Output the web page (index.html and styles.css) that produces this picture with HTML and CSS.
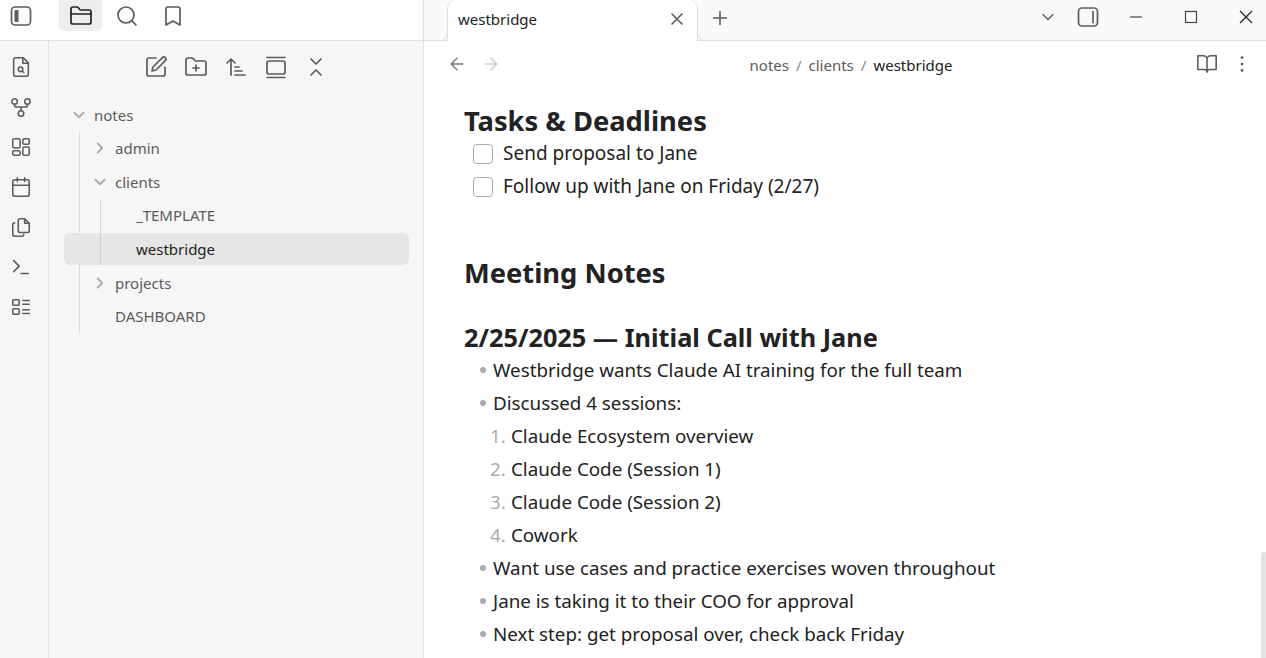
FILE: index.html
```html
<!DOCTYPE html>
<html lang="en">
<head>
<meta charset="utf-8">
<title>westbridge</title>
<link rel="stylesheet" href="styles.css">
</head>
<body>
<div class="app">
  <aside class="left">
    <div class="left-top">
      <span class="btn toggle"><svg class="ic" viewBox="0 0 24 24"><rect x="2.5" y="3" width="19" height="18" rx="3.5"/><rect class="fill" x="5.5" y="6" width="4" height="12" rx="1"/></svg></span>
      <div class="tabs-ic">
        <span class="btn act"><svg class="ic dark" viewBox="0 0 24 24"><path d="M20 20a2 2 0 0 0 2-2V8a2 2 0 0 0-2-2h-7.9a2 2 0 0 1-1.69-.9L9.6 3.9A2 2 0 0 0 7.93 3H4a2 2 0 0 0-2 2v13a2 2 0 0 0 2 2Z"/><path d="M2 10h20"/></svg></span>
        <span class="btn"><svg class="ic" viewBox="0 0 24 24"><circle cx="11" cy="11" r="8"/><path d="m21 21-4.3-4.3"/></svg></span>
        <span class="btn"><svg class="ic" viewBox="0 0 24 24"><path d="m19 21-7-4-7 4V5a2 2 0 0 1 2-2h10a2 2 0 0 1 2 2v16z"/></svg></span>
      </div>
    </div>
    <div class="left-body">
      <nav class="ribbon">
        <svg class="ic" viewBox="0 0 24 24"><path d="M14.5 2H6a2 2 0 0 0-2 2v16a2 2 0 0 0 2 2h12a2 2 0 0 0 2-2V7.5L14.5 2z"/><path d="M14 2v6h6"/><circle cx="11.5" cy="14.5" r="2.5"/><path d="M13.3 16.3 15 18"/></svg>
        <svg class="ic" viewBox="0 0 24 24"><circle cx="5" cy="6" r="3"/><circle cx="19" cy="6" r="3"/><circle cx="12" cy="19" r="3"/><path d="M5 9v1a2 2 0 0 0 2 2h10a2 2 0 0 0 2-2V9M12 12v4"/></svg>
        <svg class="ic" viewBox="0 0 24 24"><rect x="3" y="3" width="8" height="10" rx="1.5"/><rect x="14" y="3" width="7" height="6" rx="1.5"/><rect x="14" y="12" width="7" height="9" rx="1.5"/><rect x="3" y="16" width="8" height="5" rx="1.5"/></svg>
        <svg class="ic" viewBox="0 0 24 24"><path d="M8 2v4M16 2v4"/><rect x="3" y="4" width="18" height="18" rx="2"/><path d="M3 10h18"/></svg>
        <svg class="ic" viewBox="0 0 24 24"><path d="M9 16V5a2 2 0 0 1 2-2h5l5 5v8a2 2 0 0 1-2 2h-8a2 2 0 0 1-2-2Z"/><path d="M16 3v5h5"/><path d="M5 7.5A2 2 0 0 0 3 9.5V20a2 2 0 0 0 2 2h8a2 2 0 0 0 2-2"/></svg>
        <svg class="ic" viewBox="0 0 24 24"><path d="m4 17 6-6-6-6M12 19h8"/></svg>
        <svg class="ic" viewBox="0 0 24 24"><rect x="3" y="4" width="7" height="6" rx="1"/><rect x="3" y="14" width="7" height="6" rx="1"/><path d="M14 5h7M14 9h7M14 15h7M14 19h7"/></svg>
      </nav>
      <section class="explorer">
        <div class="exp-tools">
          <svg class="ic" viewBox="0 0 24 24"><path d="M12 3H5a2 2 0 0 0-2 2v14a2 2 0 0 0 2 2h14a2 2 0 0 0 2-2v-7"/><path d="M18.4 2.6a2.1 2.1 0 0 1 3 3L12 15l-4 1 1-4Z"/></svg>
          <svg class="ic" viewBox="0 0 24 24"><path d="M12 10v6M9 13h6"/><path d="M20 20a2 2 0 0 0 2-2V8a2 2 0 0 0-2-2h-7.9a2 2 0 0 1-1.69-.9L9.6 3.9A2 2 0 0 0 7.93 3H4a2 2 0 0 0-2 2v13a2 2 0 0 0 2 2Z"/></svg>
          <svg class="ic" viewBox="0 0 24 24"><path d="m3 8 4-4 4 4M7 4v16M11 12h4M11 16h7M11 20h10"/></svg>
          <svg class="ic" viewBox="0 0 24 24"><rect x="3" y="6" width="18" height="13" rx="2"/><path d="M3 2.5h18M3 22.5h18"/></svg>
          <svg class="ic" viewBox="0 0 24 24"><path d="m7 20 5-5 5 5M7 4l5 5 5-5"/></svg>
        </div>
        <div class="tree">
          <div class="row r0"><svg class="chev" viewBox="0 0 24 24"><path d="m6 9 6 6 6-6"/></svg><span>notes</span></div>
          <div class="kids k0">
            <div class="row"><svg class="chev" viewBox="0 0 24 24"><path d="m9 18 6-6-6-6"/></svg><span>admin</span></div>
            <div class="row"><svg class="chev" viewBox="0 0 24 24"><path d="m6 9 6 6 6-6"/></svg><span>clients</span></div>
            <div class="kids k1">
              <div class="row file"><span>_TEMPLATE</span></div>
              <div class="row file sel"><span>westbridge</span></div>
            </div>
            <div class="row"><svg class="chev" viewBox="0 0 24 24"><path d="m9 18 6-6-6-6"/></svg><span>projects</span></div>
            <div class="row leaf"><span>DASHBOARD</span></div>
          </div>
        </div>
      </section>
    </div>
  </aside>
  <main class="right">
    <div class="tabbar">
      <div class="tab">
        <span class="tab-title">westbridge</span>
        <svg class="ic close" viewBox="0 0 24 24"><path d="M18 6 6 18M6 6l12 12"/></svg>
      </div>
      <svg class="ic plus" viewBox="0 0 24 24"><path d="M5 12h14M12 5v14"/></svg>
      <div class="win">
        <svg class="ic w-chev" viewBox="0 0 24 24"><path d="m6 9 6 6 6-6"/></svg>
        <svg class="ic w-side" viewBox="0 0 24 24"><rect x="2.5" y="3" width="19" height="18" rx="3.5"/><path d="M17 6.5v11"/></svg>
        <svg class="w-btn" viewBox="0 0 16 16"><path d="M2 8h12"/></svg>
        <svg class="w-btn" viewBox="0 0 16 16"><rect x="2.5" y="2.5" width="11" height="11"/></svg>
        <svg class="w-btn x" viewBox="0 0 16 16"><path d="M2 2l12 12M14 2 2 14"/></svg>
      </div>
    </div>
    <div class="viewhead">
      <div class="nav">
        <svg class="ic" viewBox="0 0 24 24"><path d="m12 19-7-7 7-7M19 12H5"/></svg>
        <svg class="ic off" viewBox="0 0 24 24"><path d="M5 12h14M12 5l7 7-7 7"/></svg>
      </div>
      <div class="crumbs"><span>notes</span><i>/</i><span>clients</span><i>/</i><b>westbridge</b></div>
      <div class="actions">
        <svg class="ic" viewBox="0 0 24 24"><path d="M2 3h6a4 4 0 0 1 4 4v14a3 3 0 0 0-3-3H2zM22 3h-6a4 4 0 0 0-4 4v14a3 3 0 0 1 3-3h7z"/></svg>
        <svg class="ic" viewBox="0 0 24 24"><circle class="fill" cx="12" cy="5" r="1.5"/><circle class="fill" cx="12" cy="12" r="1.5"/><circle class="fill" cx="12" cy="19" r="1.5"/></svg>
      </div>
    </div>
    <article class="note">
      <h2 class="first">Tasks &amp; Deadlines</h2>
      <div class="task"><span class="box"></span>Send proposal to Jane</div>
      <div class="task"><span class="box"></span>Follow up with Jane on Friday (2/27)</div>
      <h2 class="second">Meeting Notes</h2>
      <h3>2/25/2025 — Initial Call with Jane</h3>
      <div class="li"><span class="dot"></span>Westbridge wants Claude AI training for the full team</div>
      <div class="li"><span class="dot"></span>Discussed 4 sessions:</div>
      <div class="num"><span class="n">1.</span>Claude Ecosystem overview</div>
      <div class="num"><span class="n">2.</span>Claude Code (Session 1)</div>
      <div class="num"><span class="n">3.</span>Claude Code (Session 2)</div>
      <div class="num"><span class="n">4.</span>Cowork</div>
      <div class="li"><span class="dot"></span>Want use cases and practice exercises woven throughout</div>
      <div class="li"><span class="dot"></span>Jane is taking it to their COO for approval</div>
      <div class="li"><span class="dot"></span>Next step: get proposal over, check back Friday</div>
    </article>
    <div class="scroll"></div>
  </main>
</div>
</body>
</html>
```

FILE: styles.css
```css
* { box-sizing: border-box; }
html, body { margin: 0; height: 100%; overflow: hidden; background: #fff; }
body { font-family: "Noto Sans", "Open Sans", sans-serif; color: #222; }
.app { display: flex; height: 658px; }
.ic { width: 24px; height: 24px; fill: none; stroke: #5c5c5c; stroke-width: 1.7; stroke-linecap: round; stroke-linejoin: round; flex: none; }
.ic .fill { fill: #5c5c5c; stroke: none; }

.left { width: 424px; flex: none; display: flex; flex-direction: column; border-right: 1px solid #e0e0e0; }
.left-top { height: 41px; flex: none; display: flex; align-items: flex-start; background: #fdfdfd; border-bottom: 1px solid #e0e0e0; padding-left: 9px; }
.btn { width: 43px; height: 31px; display: flex; align-items: center; justify-content: center; border-radius: 0 0 5px 5px; }
.toggle { width: 24px; height: 31px; }
.tabs-ic { display: flex; margin-left: 26px; gap: 3px; }
.btn.act { background: #ededed; }
.ic.dark { stroke: #222; }
.left-body { flex: 1; display: flex; min-height: 0; background: #f6f6f6; }
.ribbon { width: 49px; flex: none; border-right: 1px solid #e0e0e0; display: flex; flex-direction: column; align-items: center; gap: 18px; padding-top: 15px; padding-right: 6px; }
.ribbon .ic { width: 22px; height: 22px; }
.explorer { flex: 1; min-width: 0; }
.exp-tools { height: 54px; display: flex; justify-content: center; gap: 16px; padding-top: 14px; }
.tree { padding: 4px 14px 0 15px; font-size: 15px; color: #5c5c5c; }
.row { height: 32px; margin-bottom: 1.7px; display: flex; align-items: center; border-radius: 6px; }
.row span { line-height: 1; }
.chev { width: 18px; height: 18px; fill: none; stroke: #ababab; stroke-width: 2.4; stroke-linecap: round; stroke-linejoin: round; flex: none; margin-right: 6px; margin-left: 1px; }
.r0 { margin-bottom: 1.4px; }
.r0 .chev { margin-left: 6px; }
.kids { border-left: 1px solid #dadada; }
.k0 { margin-left: 15px; }
.k0 > .row { padding-left: 10px; }
.k1 { margin-left: 20px; }
.k0 > .leaf { padding-left: 35px; margin-bottom: 0; }
.file { margin-left: -37px; padding-left: 72px; }
.sel { background: #e6e6e6; color: #222; position: relative; }
.sel::before { content: ""; position: absolute; left: 36px; top: 0; bottom: 0; border-left: 1px solid #cfcfcf; }

.right { flex: 1; min-width: 0; position: relative; display: flex; flex-direction: column; }
.tabbar { height: 41px; flex: none; background: #fafafa; border-bottom: 1px solid #e0e0e0; display: flex; align-items: flex-start; padding-left: 23px; }
.tab { width: 251px; height: 41px; background: #fff; border: 1px solid #e0e0e0; border-top: 0; border-bottom: 0; border-top-left-radius: 9px; border-top-right-radius: 9px; display: flex; align-items: center; justify-content: space-between; padding: 0 10px 3px 10px; font-size: 15px; color: #222; position: relative; }
.tab::before, .tab::after { content: ""; position: absolute; bottom: 0; width: 8px; height: 8px; border-bottom: 1px solid #e0e0e0; }
.tab::before { left: -9px; border-right: 1px solid #e0e0e0; border-bottom-right-radius: 8px; }
.tab::after { right: -9px; border-left: 1px solid #e0e0e0; border-bottom-left-radius: 8px; }
.close { width: 20px; height: 20px; stroke-width: 2; }
.plus { margin: 7px 0 0 11px; width: 22px; height: 22px; }
.win { margin-left: auto; display: flex; align-items: center; height: 34px; }
.w-chev { width: 20px; height: 20px; stroke-width: 1.6; margin-right: 18px; }
.w-side { margin-right: 28px; }
.w-btn { width: 16px; height: 16px; fill: none; stroke: #444; stroke-width: 1.2; margin-right: 39px; }
.w-btn.x { margin-right: 12px; stroke: #222; }

.viewhead { height: 48px; flex: none; display: flex; align-items: center; padding: 0 13px 2px 23px; position: relative; }
.nav { display: flex; gap: 14px; }
.nav .ic { width: 20px; height: 20px; stroke: #777; }
.nav .off { stroke: #cfcfcf; }
.crumbs { flex: 1; text-align: center; font-size: 15px; color: #5c5c5c; padding: 2px 0 0 5px; }
.crumbs i { font-style: normal; margin: 0 7px; color: #888; }
.crumbs b { font-weight: 400; color: #222; }
.actions { display: flex; gap: 13px; align-items: center; }
.actions .ic { width: 22px; height: 22px; }

.note { padding: 16px 0 0 40px; overflow: hidden; flex: 1; font-size: 18.8px; line-height: 33px; color: #222; }
h2 { margin: 0; font-size: 27.3px; font-weight: 700; line-height: 32px; }
h3 { margin: 32px 0 0; font-size: 25.3px; font-weight: 700; line-height: 33px; }
.second { margin-top: 54px; }
.task, .li, .num { white-space: nowrap; height: 33px; display: flex; align-items: center; }
.task { padding-left: 9px; font-size: 19px; }
.box { width: 20px; height: 20px; border: 1px solid #ababab; border-radius: 4px; background: #fff; margin-right: 10px; flex: none; }
.li { padding-left: 16px; }
.dot { width: 6px; height: 6px; border-radius: 50%; background: #ababab; margin: 0 7px 2px 0; flex: none; }
.num { padding-left: 26px; }
.n { color: #ababab; width: 21px; flex: none; }
.scroll { position: absolute; right: 0; bottom: 0; width: 5px; height: 106px; background: #e3e3e3; border-top-left-radius: 3px; }
```
